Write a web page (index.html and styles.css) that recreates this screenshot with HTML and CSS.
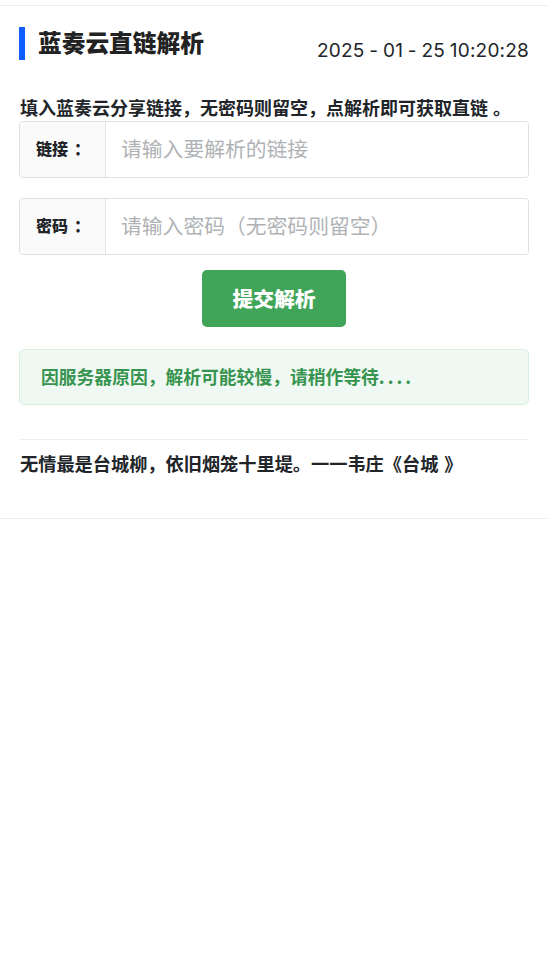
FILE: index.html
```html
<!DOCTYPE html>
<html lang="zh-CN">
<head>
<meta charset="utf-8">
<title>蓝奏云直链解析</title>
<link rel="stylesheet" href="styles.css">
</head>
<body>
<main class="panel">
  <header class="head">
    <h1 class="title">蓝奏云直链解析</h1>
    <time class="clock">2025 - 01 - 25 10:20:28</time>
  </header>
  <p class="hint">填入蓝奏云分享链接，无密码则留空，点解析即可获取直链<span class="stop">。</span></p>
  <form class="form">
    <div class="field">
      <label class="label" for="url"><span>链接<span class="colon">：</span></span></label>
      <input class="input" id="url" type="text" placeholder="请输入要解析的链接">
    </div>
    <div class="field">
      <label class="label" for="pwd"><span>密码<span class="colon">：</span></span></label>
      <input class="input" id="pwd" type="text" placeholder="请输入密码（无密码则留空）">
    </div>
    <button class="submit" type="button">提交解析</button>
  </form>
  <div class="notice"><span>因服务器原因，解析可能较慢，请稍作等待<span class="dots">....</span></span></div>
  <hr class="rule">
  <p class="quote">无情最是台城柳，依旧烟笼十里堤。一一韦庄《台城<span class="close">》</span></p>
</main>
</body>
</html>
```
FILE: styles.css
```css
* { box-sizing: border-box; }
html, body { margin: 0; background: #fff; }
body {
  font-family: "Noto Sans CJK SC", "Noto Sans", sans-serif;
  color: #212529;
}
.panel {
  margin-top: 5px;
  padding: 21px 18px 0 19px;
  height: 514px;
  border-top: 1px solid #e9ecef;
  border-bottom: 1px solid #e9ecef;
}
.head { display: flex; justify-content: space-between; align-items: flex-start; }
.title {
  margin: 0;
  height: 33px;
  padding-left: 13px;
  border-left: 6px solid #0d5cff;
  font-size: 23.7px;
  line-height: 30px;
  font-weight: 900;
  color: #222;
}
.clock {
  margin-top: 10px;
  font-family: "Inter", sans-serif;
  font-size: 19px;
  line-height: 28px;
  letter-spacing: 0.2px;
  word-spacing: -0.8px;
}
.hint {
  margin: 29px 0 0 1px;
  font-size: 18px;
  line-height: 27px;
  font-weight: 700;
  white-space: nowrap;
}
.stop { margin-left: 5px; }
.form { display: flex; flex-direction: column; }
.field {
  display: flex;
  height: 57px;
  margin-bottom: 20px;
  border: 1px solid #e0e0e0;
  border-radius: 4px;
  overflow: hidden;
}
.field:nth-child(2) { margin-bottom: 15px; }
.label {
  display: flex;
  align-items: center;
  width: 86px;
  flex: none;
  padding: 0 0 3px 16px;
  background: #fafafa;
  border-right: 1px solid #e4e4e4;
  font-family: "Noto Sans CJK TC", sans-serif;
  font-size: 16px;
  font-weight: 900;
}
.colon { margin-left: 6px; }
.input {
  flex: 1;
  min-width: 0;
  border: 0;
  outline: 0;
  padding: 0 15px 3px;
  background: #fff;
  font: 400 20.8px "Noto Sans CJK SC", sans-serif;
}
.input::placeholder { color: #b0b3b6; opacity: 1; }
.submit {
  align-self: center;
  width: 144px;
  height: 57px;
  padding: 0 0 2px;
  border: 0;
  border-radius: 5px;
  background: #40a558;
  color: #fff;
  font: 900 20.8px "Noto Sans CJK SC", sans-serif;
}
.notice {
  margin-top: 22px;
  height: 56px;
  padding: 0 21px 2px;
  display: flex;
  align-items: center;
  border: 1px solid #d9f0df;
  border-radius: 5px;
  background: #eff8f2;
  color: #36944f;
  font-size: 17.8px;
  font-weight: 700;
}
.dots { letter-spacing: 3px; }
.rule {
  margin: 34px 0 0;
  border: 0;
  border-top: 1px solid #eceef0;
}
.quote {
  margin: 10px 0 0 1px;
  font-size: 18.2px;
  line-height: 27px;
  font-weight: 700;
  white-space: nowrap;
}
.close { margin-left: 6px; }
```
